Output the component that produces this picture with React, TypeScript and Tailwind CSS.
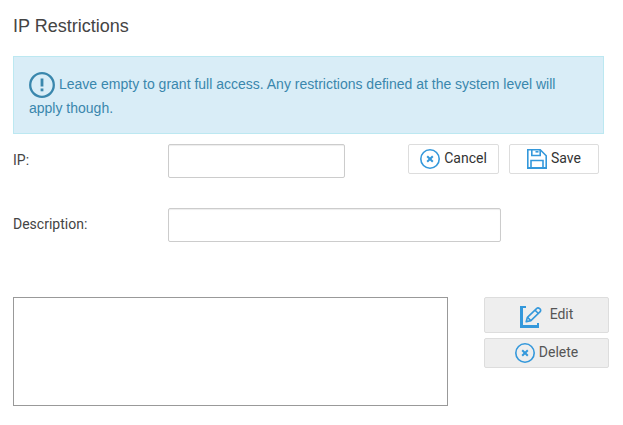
import React, { useState } from 'react';

interface IconProps {
    className?: string;
}

const AlertIcon: React.FC<IconProps> = ({ className }) => (
    <svg viewBox="0 0 26 26" fill="none" stroke="currentColor" className={className} aria-hidden="true">
        <circle cx="13" cy="13" r="11.8" strokeWidth="2.3" />
        <path d="M13 6.5v8" strokeWidth="2.8" />
        <path d="M13 16.5v2.8" strokeWidth="2.8" />
    </svg>
);

const CancelIcon: React.FC<IconProps> = ({ className }) => (
    <svg viewBox="0 0 20 20" fill="none" stroke="currentColor" className={className} aria-hidden="true">
        <circle cx="10" cy="10" r="9.2" strokeWidth="1.6" />
        <path d="M7.2 7.2l5.6 5.6M12.8 7.2l-5.6 5.6" strokeWidth="2" />
    </svg>
);

const SaveIcon: React.FC<IconProps> = ({ className }) => (
    <svg viewBox="0 0 20 20" fill="none" stroke="currentColor" strokeWidth="1.6" className={className} aria-hidden="true">
        <path d="M.8.8h12.4l6 6v12.4H.8z" />
        <path d="M4.8.8v5.7h8.4V.8" />
        <path d="M8.5 2.8h3" />
        <path d="M4 19.2V11.5h12v7.7" />
        <path d="M0 19h20" strokeWidth="2" />
    </svg>
);

const EditIcon: React.FC<IconProps> = ({ className }) => (
    <svg viewBox="0 0 22 22" fill="none" stroke="currentColor" className={className} aria-hidden="true">
        <path d="M6 1H0" strokeWidth="2" />
        <path d="M1.5 0v22" strokeWidth="3" />
        <path d="M0 20.5h19" strokeWidth="3" />
        <path d="M18 22v-5" strokeWidth="2" />
        <path d="M6.2 15.8l1.2-4.5 9.4-9q1.3-1 2.9.4t.5 3l-9.3 8.9z" strokeWidth="1.6" strokeLinejoin="round" />
        <path d="M15 4.1l3.4 3.4M7.6 11.4l3.2 3.2" strokeWidth="1.5" />
    </svg>
);

const inputClass = 'h-[34px] rounded-[2px] border border-[#ccc] bg-white px-2 text-sm text-[#444] shadow-[inset_0_1px_1px_rgba(0,0,0,0.075)]';
const lightButton = 'flex h-[30px] items-center justify-center gap-1 rounded-[2px] border border-[#ddd] bg-white text-sm text-[#333]';
const greyButton = 'flex w-full items-center justify-center rounded-[2px] border border-[#ddd] bg-[#eee] text-sm text-[#555]';

const App: React.FC = () => {
    const [ip, setIp] = useState('');
    const [description, setDescription] = useState('');

    const handleSubmit = (e: React.FormEvent) => {
        e.preventDefault();
    };

    const handleCancel = () => {
        setIp('');
        setDescription('');
    };

    return (
        <main className="bg-white pt-3.5 pr-3.5 pb-5 pl-[13px] font-['Roboto',sans-serif] text-sm text-[#444]">
            <h1 className="font-['Liberation_Sans',Arial,sans-serif] text-lg leading-6 text-[#444]">IP Restrictions</h1>

            <div role="note" className="mt-[18px] mr-[5px] h-[78px] border border-[#bce8f1] bg-[#d9edf7] p-[15px] font-['Liberation_Sans',Arial,sans-serif] text-sm leading-6 text-[#3a87ad]">
                <AlertIcon className="-my-1 mr-1 inline-block size-[26px] align-middle" />
                Leave empty to grant full access. Any restrictions defined at the system level will apply though.
            </div>

            <form onSubmit={handleSubmit}>
                <div className="mt-2.5 flex items-start">
                    <label htmlFor="ip" className="w-[155px] leading-8">IP:</label>
                    <input
                        id="ip"
                        type="text"
                        value={ip}
                        onChange={(e) => setIp(e.target.value)}
                        className={`${inputClass} w-[177px]`}
                    />
                    <div className="mr-2.5 ml-auto flex gap-2.5">
                        <button type="button" onClick={handleCancel} className={`${lightButton} w-[91px]`}>
                            <CancelIcon className="size-5 text-[#3498db]" />
                            <span className="pb-0.5">Cancel</span>
                        </button>
                        <button type="submit" className={`${lightButton} w-[90px]`}>
                            <SaveIcon className="size-5 text-[#3498db]" />
                            <span className="pb-0.5">Save</span>
                        </button>
                    </div>
                </div>

                <div className="mt-[30px] flex items-start">
                    <label htmlFor="description" className="w-[155px] leading-8">Description:</label>
                    <input
                        id="description"
                        type="text"
                        value={description}
                        onChange={(e) => setDescription(e.target.value)}
                        className={`${inputClass} w-[333px]`}
                    />
                </div>
            </form>

            <div className="mt-[55px] flex items-start gap-9">
                <select multiple aria-label="IP Restrictions" className="h-[109px] min-w-0 flex-1 border border-[#999] bg-white" />
                <div className="flex w-[125px] flex-col gap-[5px]">
                    <button type="button" className={`${greyButton} h-9 gap-2`}>
                        <EditIcon className="mt-1 size-[22px] text-[#3498db]" />
                        <span className="pb-0.5">Edit</span>
                    </button>
                    <button type="button" className={`${greyButton} h-[30px] gap-1`}>
                        <CancelIcon className="size-5 text-[#3498db]" />
                        <span className="pb-0.5">Delete</span>
                    </button>
                </div>
            </div>
        </main>
    );
};

export default App;
